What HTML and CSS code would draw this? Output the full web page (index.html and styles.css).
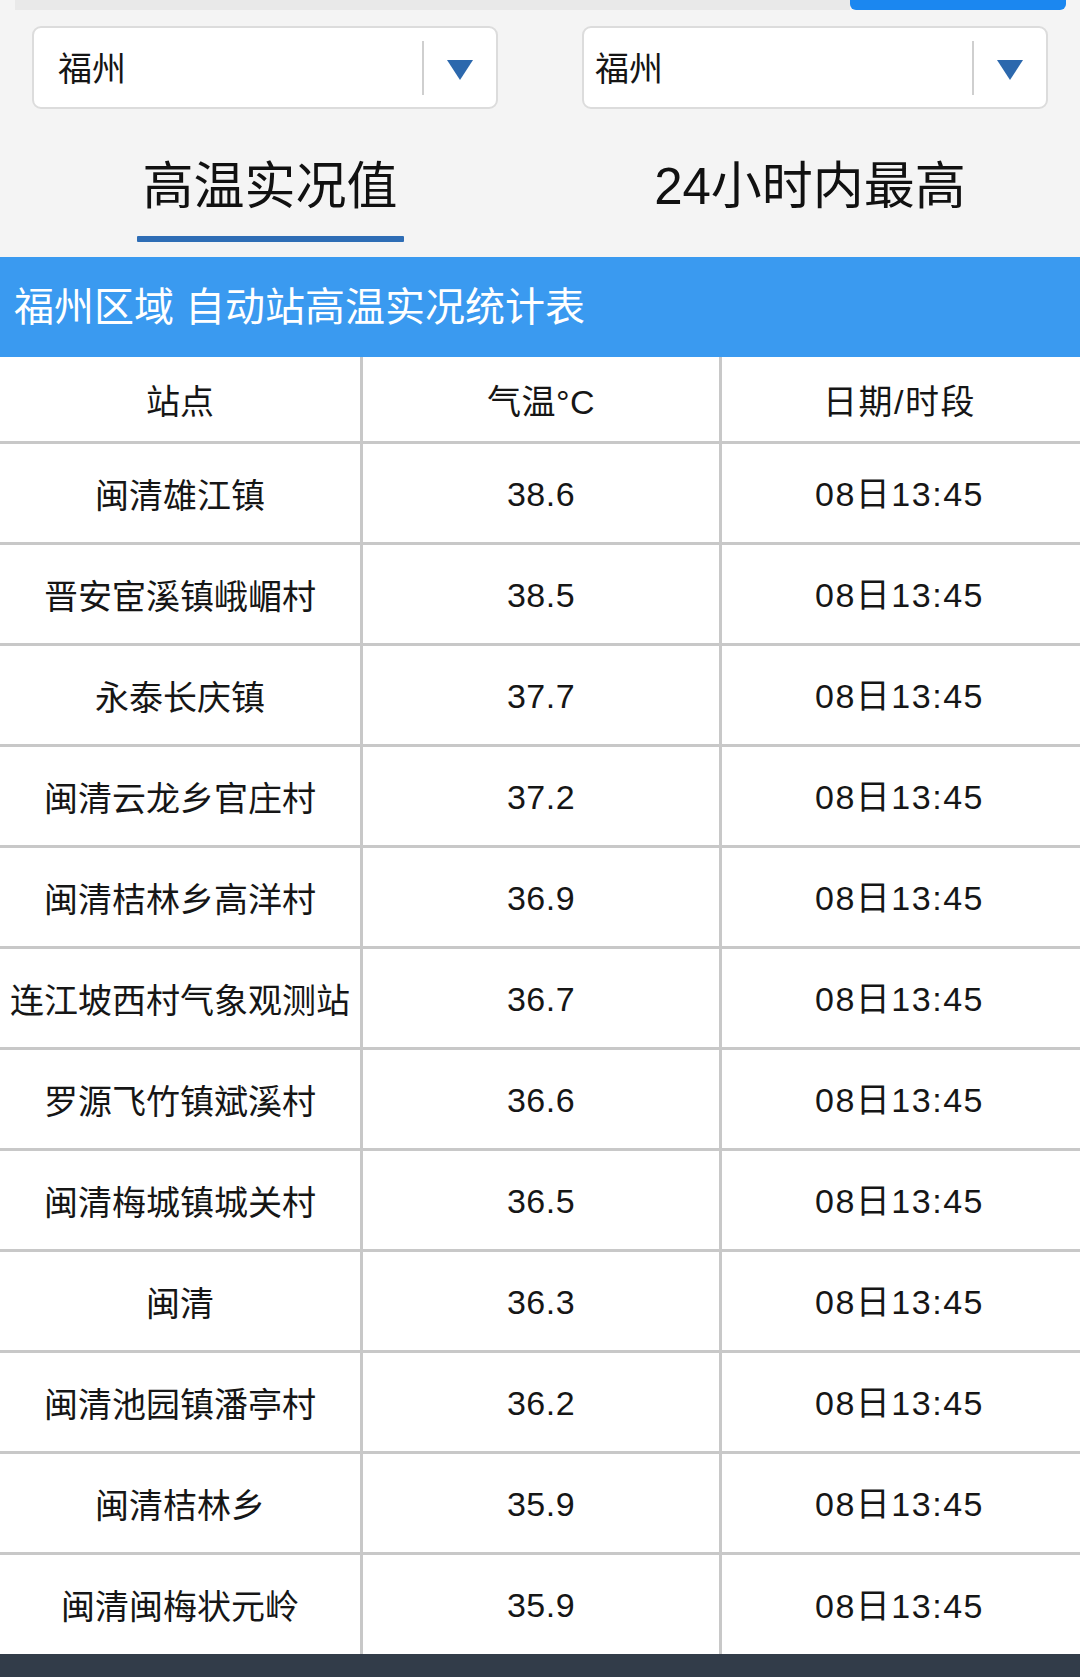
FILE: index.html
```html
<!DOCTYPE html>
<html lang="zh-CN">
<head>
<meta charset="utf-8">
<title>福州区域 自动站高温实况统计表</title>
<link rel="stylesheet" href="styles.css">
</head>
<body>
<div class="page">
  <div class="topstrip">
    <div class="topgray"></div>
    <div class="topbtn"></div>
  </div>
  <div class="selects">
    <div class="select"><span class="sel-text">福州</span><span class="sel-div"></span><span class="sel-arrow"></span></div>
    <div class="select"><span class="sel-text sel-text-r">福州</span><span class="sel-div"></span><span class="sel-arrow"></span></div>
  </div>
  <div class="tabs">
    <div class="tab active"><span class="tab-label">高温实况值</span><span class="tab-line"></span></div>
    <div class="tab"><span class="tab-label">24小时内最高</span><span class="tab-line none"></span></div>
  </div>
  <div class="band">福州区域 自动站高温实况统计表</div>
  <div class="table">
    <div class="row head"><div class="cell">站点</div><div class="cell">气温°C</div><div class="cell">日期/时段</div></div>
    <div class="row"><div class="cell">闽清雄江镇</div><div class="cell">38.6</div><div class="cell">08日13:45</div></div>
    <div class="row"><div class="cell">晋安宦溪镇峨嵋村</div><div class="cell">38.5</div><div class="cell">08日13:45</div></div>
    <div class="row"><div class="cell">永泰长庆镇</div><div class="cell">37.7</div><div class="cell">08日13:45</div></div>
    <div class="row"><div class="cell">闽清云龙乡官庄村</div><div class="cell">37.2</div><div class="cell">08日13:45</div></div>
    <div class="row"><div class="cell">闽清桔林乡高洋村</div><div class="cell">36.9</div><div class="cell">08日13:45</div></div>
    <div class="row"><div class="cell">连江坡西村气象观测站</div><div class="cell">36.7</div><div class="cell">08日13:45</div></div>
    <div class="row"><div class="cell">罗源飞竹镇斌溪村</div><div class="cell">36.6</div><div class="cell">08日13:45</div></div>
    <div class="row"><div class="cell">闽清梅城镇城关村</div><div class="cell">36.5</div><div class="cell">08日13:45</div></div>
    <div class="row"><div class="cell">闽清</div><div class="cell">36.3</div><div class="cell">08日13:45</div></div>
    <div class="row"><div class="cell">闽清池园镇潘亭村</div><div class="cell">36.2</div><div class="cell">08日13:45</div></div>
    <div class="row"><div class="cell">闽清桔林乡</div><div class="cell">35.9</div><div class="cell">08日13:45</div></div>
    <div class="row last"><div class="cell">闽清闽梅状元岭</div><div class="cell">35.9</div><div class="cell">08日13:45</div></div>
  </div>
  <div class="footer"></div>
</div>
</body>
</html>
```

FILE: styles.css
```css
html, body {
  margin: 0;
  padding: 0;
  background: #f4f4f4;
}
body {
  font-family: "Liberation Sans", "Noto Sans CJK SC", sans-serif;
  color: #151515;
}
.page {
  width: 1080px;
  height: 1677px;
  overflow: hidden;
  display: flex;
  flex-direction: column;
}
.topstrip {
  display: flex;
  height: 10px;
  padding-left: 15px;
  padding-right: 14px;
}
.topgray {
  flex: 1;
  background: #e9e9e9;
}
.topbtn {
  width: 216px;
  background: #1b87f0;
  border-radius: 0 0 6px 6px;
}
.selects {
  display: flex;
  gap: 84px;
  padding: 16px 0 0 32px;
}
.select {
  box-sizing: border-box;
  width: 466px;
  height: 83px;
  background: #fff;
  border: 2px solid #dcdcdc;
  border-radius: 9px;
  display: flex;
  align-items: center;
}
.sel-text {
  font-size: 34px;
  line-height: 40px;
  padding-left: 24px;
  padding-top: 2px;
  width: 364px;
  color: #151515;
}
.sel-text-r {
  padding-left: 11px;
  width: 377px;
}
.sel-div {
  width: 2px;
  height: 54px;
  background: #cfcfcf;
}
.sel-arrow {
  margin-left: 23px;
  margin-top: 5px;
  width: 0;
  height: 0;
  border-left: 13px solid transparent;
  border-right: 13px solid transparent;
  border-top: 20px solid #2c68ad;
}
.tabs {
  display: flex;
  height: 148px;
}
.tab {
  width: 540px;
  display: flex;
  flex-direction: column;
  align-items: center;
}
.tab-label {
  margin-top: 53px;
  font-size: 51px;
  line-height: 50px;
  height: 50px;
  color: #111;
}
.tab-line {
  margin-top: 24px;
  width: 267px;
  height: 6px;
  background: #2e6db5;
  border-radius: 1px;
}
.tab-line.none {
  background: transparent;
}
.band {
  height: 100px;
  background: #3a9af0;
  color: #fff;
  font-size: 40px;
  line-height: 100px;
  padding-left: 14px;
  white-space: nowrap;
}
.table {
  background: #fff;
  display: flex;
  flex-direction: column;
}
.row {
  box-sizing: border-box;
  height: 101px;
  display: grid;
  grid-template-columns: 363px 359px 1fr;
  border-bottom: 3px solid #c8c8c8;
}
.row.head {
  height: 87px;
}
.row.last {
  border-bottom: none;
  height: 99px;
}
.cell {
  display: flex;
  align-items: center;
  justify-content: center;
  font-size: 34px;
  color: #161616;
  white-space: nowrap;
}
.cell:nth-child(1),
.cell:nth-child(2) {
  border-right: 3px solid #c8c8c8;
}
.cell:nth-child(2) {
  letter-spacing: 0.5px;
  padding-top: 2px;
}
.cell:nth-child(3) {
  letter-spacing: 1.5px;
  padding-right: 3px;
  padding-bottom: 3px;
}
.row.head .cell {
  padding-top: 0;
  padding-bottom: 0;
}
.footer {
  flex: 1;
  background: #323c49;
}
```
